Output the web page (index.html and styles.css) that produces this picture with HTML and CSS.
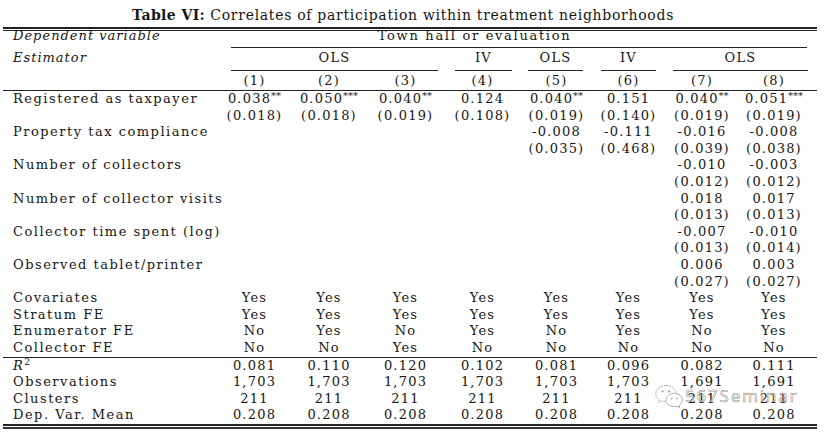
FILE: index.html
```html
<!DOCTYPE html>
<html>
<head>
<meta charset="utf-8">
<title>Table VI</title>
<link rel="stylesheet" href="styles.css">
</head>
<body>
<div class="page">
  <div class="caption"><b>Table VI:</b> Correlates of participation within treatment neighborhoods</div>
  <div class="toprule"></div>
  <table class="reg">
    <colgroup>
      <col class="w-lab"><col class="w1"><col class="w2"><col class="w3"><col class="w4"><col class="w5"><col class="w6"><col class="w7"><col class="w8">
    </colgroup>
    <thead>
      <tr class="h-a">
        <th class="lab it">Dependent variable</th>
        <th colspan="8"><div class="grp town">Town hall or evaluation</div></th>
      </tr>
      <tr class="h-b">
        <th class="lab it">Estimator</th>
        <th colspan="3"><div class="grp g13">OLS</div></th>
        <th><div class="grp g4">IV</div></th>
        <th><div class="grp g5">OLS</div></th>
        <th><div class="grp g6">IV</div></th>
        <th colspan="2"><div class="grp g78">OLS</div></th>
      </tr>
      <tr class="h-c">
        <th class="lab"></th>
        <th>(1)</th><th>(2)</th><th>(3)</th><th>(4)</th><th>(5)</th><th>(6)</th><th>(7)</th><th class="last">(8)</th>
      </tr>
    </thead>
    <tbody>
      <tr><td class="lab">Registered as taxpayer</td><td>0.038<sup class="st">**</sup></td><td>0.050<sup class="st">***</sup></td><td>0.040<sup class="st">**</sup></td><td>0.124</td><td>0.040<sup class="st">**</sup></td><td>0.151</td><td>0.040<sup class="st">**</sup></td><td class="last">0.051<sup class="st">***</sup></td></tr>
      <tr><td class="lab"></td><td>(0.018)</td><td>(0.018)</td><td>(0.019)</td><td>(0.108)</td><td>(0.019)</td><td>(0.140)</td><td>(0.019)</td><td class="last">(0.019)</td></tr>
      <tr><td class="lab">Property tax compliance</td><td></td><td></td><td></td><td></td><td>-0.008</td><td>-0.111</td><td>-0.016</td><td class="last">-0.008</td></tr>
      <tr><td class="lab"></td><td></td><td></td><td></td><td></td><td>(0.035)</td><td>(0.468)</td><td>(0.039)</td><td class="last">(0.038)</td></tr>
      <tr><td class="lab">Number of collectors</td><td></td><td></td><td></td><td></td><td></td><td></td><td>-0.010</td><td class="last">-0.003</td></tr>
      <tr><td class="lab"></td><td></td><td></td><td></td><td></td><td></td><td></td><td>(0.012)</td><td class="last">(0.012)</td></tr>
      <tr><td class="lab">Number of collector visits</td><td></td><td></td><td></td><td></td><td></td><td></td><td>0.018</td><td class="last">0.017</td></tr>
      <tr><td class="lab"></td><td></td><td></td><td></td><td></td><td></td><td></td><td>(0.013)</td><td class="last">(0.013)</td></tr>
      <tr><td class="lab">Collector time spent (log)</td><td></td><td></td><td></td><td></td><td></td><td></td><td>-0.007</td><td class="last">-0.010</td></tr>
      <tr><td class="lab"></td><td></td><td></td><td></td><td></td><td></td><td></td><td>(0.013)</td><td class="last">(0.014)</td></tr>
      <tr><td class="lab">Observed tablet/printer</td><td></td><td></td><td></td><td></td><td></td><td></td><td>0.006</td><td class="last">0.003</td></tr>
      <tr><td class="lab"></td><td></td><td></td><td></td><td></td><td></td><td></td><td>(0.027)</td><td class="last">(0.027)</td></tr>
      <tr><td class="lab">Covariates</td><td>Yes</td><td>Yes</td><td>Yes</td><td>Yes</td><td>Yes</td><td>Yes</td><td>Yes</td><td class="last">Yes</td></tr>
      <tr><td class="lab">Stratum FE</td><td>Yes</td><td>Yes</td><td>Yes</td><td>Yes</td><td>Yes</td><td>Yes</td><td>Yes</td><td class="last">Yes</td></tr>
      <tr><td class="lab">Enumerator FE</td><td>No</td><td>Yes</td><td>No</td><td>Yes</td><td>No</td><td>Yes</td><td>No</td><td class="last">Yes</td></tr>
      <tr><td class="lab">Collector FE</td><td>No</td><td>No</td><td>Yes</td><td>No</td><td>No</td><td>No</td><td>No</td><td class="last">No</td></tr>
      <tr class="sep"><td class="lab"><i class="math">R</i><sup class="sq">2</sup></td><td>0.081</td><td>0.110</td><td>0.120</td><td>0.102</td><td>0.081</td><td>0.096</td><td>0.082</td><td class="last">0.111</td></tr>
      <tr><td class="lab">Observations</td><td>1,703</td><td>1,703</td><td>1,703</td><td>1,703</td><td>1,703</td><td>1,703</td><td>1,691</td><td class="last">1,691</td></tr>
      <tr><td class="lab">Clusters</td><td>211</td><td>211</td><td>211</td><td>211</td><td>211</td><td>211</td><td>211</td><td class="last">211</td></tr>
      <tr><td class="lab">Dep. Var. Mean</td><td>0.208</td><td>0.208</td><td>0.208</td><td>0.208</td><td>0.208</td><td>0.208</td><td>0.208</td><td class="last">0.208</td></tr>
    </tbody>
  </table>
  <div class="bottomrule"></div>

  <div class="watermark">
    <svg class="wm-icon" width="30" height="26" viewBox="0 0 30 26" aria-hidden="true">
      <path d="M12 2.5C6.2 2.5 1.8 6.2 1.8 10.6c0 2.5 1.4 4.7 3.6 6.2l-0.9 2.9 3.4-1.8c1.3 0.4 2.6 0.6 4.1 0.6" fill="none" stroke="#8a8a8a" stroke-width="0.9" stroke-dasharray="2 1"/>
      <path d="M12 2.5c5.2 0 9.4 3.1 10.1 7.2" fill="none" stroke="#8a8a8a" stroke-width="0.9" stroke-dasharray="2 1"/>
      <circle cx="8.5" cy="8.4" r="1.1" fill="#8a8a8a"/>
      <circle cx="15.2" cy="8.4" r="1.1" fill="#8a8a8a"/>
      <path d="M20.3 10.4c-4.6 0-8.3 3-8.3 6.6s3.7 6.6 8.3 6.6c1 0 2-0.1 2.9-0.4l2.7 1.5-0.7-2.4c1.9-1.2 3.1-3.1 3.1-5.3 0-3.6-3.4-6.6-8-6.6z" fill="rgba(255,255,255,0.6)" stroke="#8a8a8a" stroke-width="0.9"/>
      <circle cx="17.6" cy="15.6" r="0.9" fill="#8a8a8a"/>
      <circle cx="23" cy="15.6" r="0.9" fill="#8a8a8a"/>
    </svg>
    <span class="wm-text">567Seminar</span>
  </div>
</div>
</body>
</html>
```

FILE: styles.css
```css
html, body {
  margin: 0;
  padding: 0;
  background: #ffffff;
}

body {
  font-family: "DejaVu Serif", "Liberation Serif", serif;
  font-size: 13px;
  color: #161616;
}

.page {
  position: relative;
  width: 830px;
  height: 434px;
  overflow: hidden;
}

.caption {
  box-sizing: border-box;
  width: 814px;
  height: 27px;
  margin-left: 3px;
  padding: 4px 14px 0 0;
  font-size: 14px;
  line-height: 23px;
  text-align: center;
  letter-spacing: 0.7px;
  white-space: nowrap;
}

.caption b {
  font-weight: bold;
  letter-spacing: 0.4px;
}

.toprule {
  width: 814px;
  height: 1px;
  margin-left: 3px;
  border-top: 2px solid #222;
  border-bottom: 1px solid #222;
}

.bottomrule {
  width: 814px;
  height: 1px;
  margin-left: 3px;
  border-top: 2px solid #222;
  border-bottom: 2px solid #333;
}

.reg {
  width: 814px;
  margin-left: 3px;
  border-collapse: collapse;
  border-spacing: 0;
  table-layout: fixed;
  letter-spacing: 1.2px;
}

.w-lab { width: 215px; }
.w1 { width: 73px; }
.w2 { width: 76px; }
.w3 { width: 77px; }
.w4 { width: 77px; }
.w5 { width: 71px; }
.w6 { width: 73px; }
.w7 { width: 74px; }
.w8 { width: 78px; }

.reg th,
.reg td {
  padding: 0;
  font-weight: normal;
  text-align: center;
  white-space: nowrap;
  vertical-align: top;
}

.reg .lab {
  text-align: left;
  padding-left: 10px;
  letter-spacing: 1.5px;
}

.reg .lab.it {
  letter-spacing: 1px;
}

.reg .last {
  padding-right: 8px;
}

.it {
  font-style: italic;
}

.h-a th {
  line-height: 10px;
}

.grp {
  border-bottom: 1px solid #222;
}

.h-a .grp {
  padding-bottom: 6px;
}

.town {
  margin: 0 10px 0 13px;
  padding-right: 89px;
  letter-spacing: 1.7px;
}

.h-b th {
  line-height: 20px;
}

.h-b .grp {
  padding-bottom: 2px;
}

.g13 { margin: 0 6px 0 13px; }
.g4 { margin: 0 9px 0 11px; }
.g5 { margin: 0 9px 0 7px; }
.g6 { margin: 0 9px 0 9px; }
.g78 { margin: 0 9px 0 8px; }

.h-c th {
  line-height: 19px;
  border-bottom: 1px solid #222;
}

.reg tbody td {
  height: 16.6px;
  line-height: 16.6px;
}

.reg tr.sep td {
  border-top: 1px solid #222;
}

.st {
  font-size: 10px;
  line-height: 0;
  vertical-align: 4px;
  letter-spacing: 0;
}

.math {
  font-style: italic;
}

.sq {
  font-size: 9px;
  line-height: 0;
  vertical-align: 5px;
  letter-spacing: 0;
}

.watermark {
  position: absolute;
  left: 654px;
  top: 383px;
  display: flex;
  align-items: center;
  gap: 1px;
  pointer-events: none;
}

.wm-icon {
  display: block;
  opacity: 0.8;
}

.wm-text {
  font-family: "Noto Sans", "DejaVu Sans", sans-serif;
  font-size: 17px;
  line-height: 20px;
  letter-spacing: 1.8px;
  color: rgba(255, 255, 255, 0.7);
  -webkit-text-stroke: 0.6px rgba(120, 120, 120, 0.8);
}
```
